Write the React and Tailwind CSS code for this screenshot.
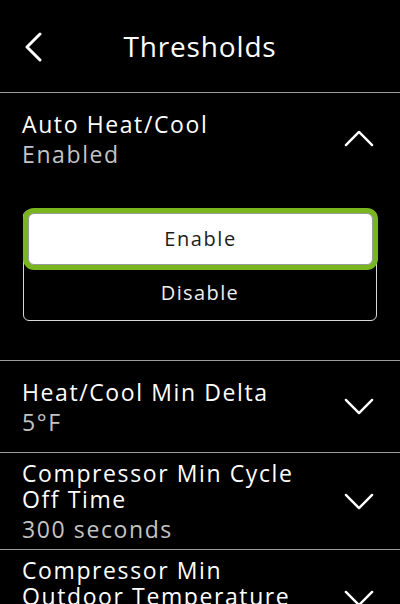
import React from 'react';

const Chevron = ({ dir = 'down', className = '' }) => (
    <svg viewBox="0 0 32 18" className={className} fill="none" stroke="currentColor" strokeWidth="2.6" strokeLinecap="round" strokeLinejoin="round">
        {dir === 'down' ? <polyline points="2,2 16,16 30,2" /> : <polyline points="2,16 16,2 30,16" />}
    </svg>
);

const Divider = () => <div className="h-px bg-[#9c9c9c]" />;

const Row = ({ title, value, open = false }) => (
    <div className="flex min-h-[91px] items-center justify-between py-[7px] pl-[22px] pr-[26px]">
        <div className="flex flex-col tracking-[0.1em]">
            {title.map((line, i) => (
                <span key={i} className="text-[23px] leading-[26px] text-white">{line}</span>
            ))}
            <span className="mt-[4px] text-[23px] leading-[26px] text-[#c4c4c4]">{value}</span>
        </div>
        <Chevron dir={open ? 'up' : 'down'} className="h-[17px] w-[30px] shrink-0 text-white" />
    </div>
);

export default function App() {
    return (
        <div className="h-[604px] w-[400px] overflow-hidden bg-black font-['Open_Sans',sans-serif] text-white">
            {/* header */}
            <div className="relative flex h-[92px] items-center justify-center">
                <svg viewBox="0 0 18 30" className="absolute left-[24px] top-[32px] h-[30px] w-[18px]" fill="none" stroke="white" strokeWidth="3" strokeLinecap="round" strokeLinejoin="round">
                    <polyline points="16,2 3,15 16,28" />
                </svg>
                <h1 className="text-[28px] leading-[28px] tracking-[0.03em]">Thresholds</h1>
            </div>
            <Divider />

            {/* expanded section */}
            <Row title={['Auto Heat/Cool']} value="Enabled" open />
            <div className="mx-[23px] mt-[26px] mb-[39px] rounded-[6px] border border-[#d8d8d8]">
                <div className="ml-[4px] mr-[3px] mt-[2px] flex h-[52px] items-center justify-center rounded-[6px] border border-[#9a9a9a] bg-white text-[20px] tracking-[0.08em] text-[#1c1c1c] ring-[5px] ring-[#79b51c]">
                    Enable
                </div>
                <div className="flex h-[55px] items-center justify-center text-[20px] tracking-[0.07em] text-[#eeeeee]">
                    Disable
                </div>
            </div>
            <Divider />

            <Row title={['Heat/Cool Min Delta']} value="5°F" />
            <Divider />
            <Row title={['Compressor Min Cycle', 'Off Time']} value="300 seconds" />
            <Divider />
            <Row title={['Compressor Min', 'Outdoor Temperature']} value="-20°F" />
        </div>
    );
}
